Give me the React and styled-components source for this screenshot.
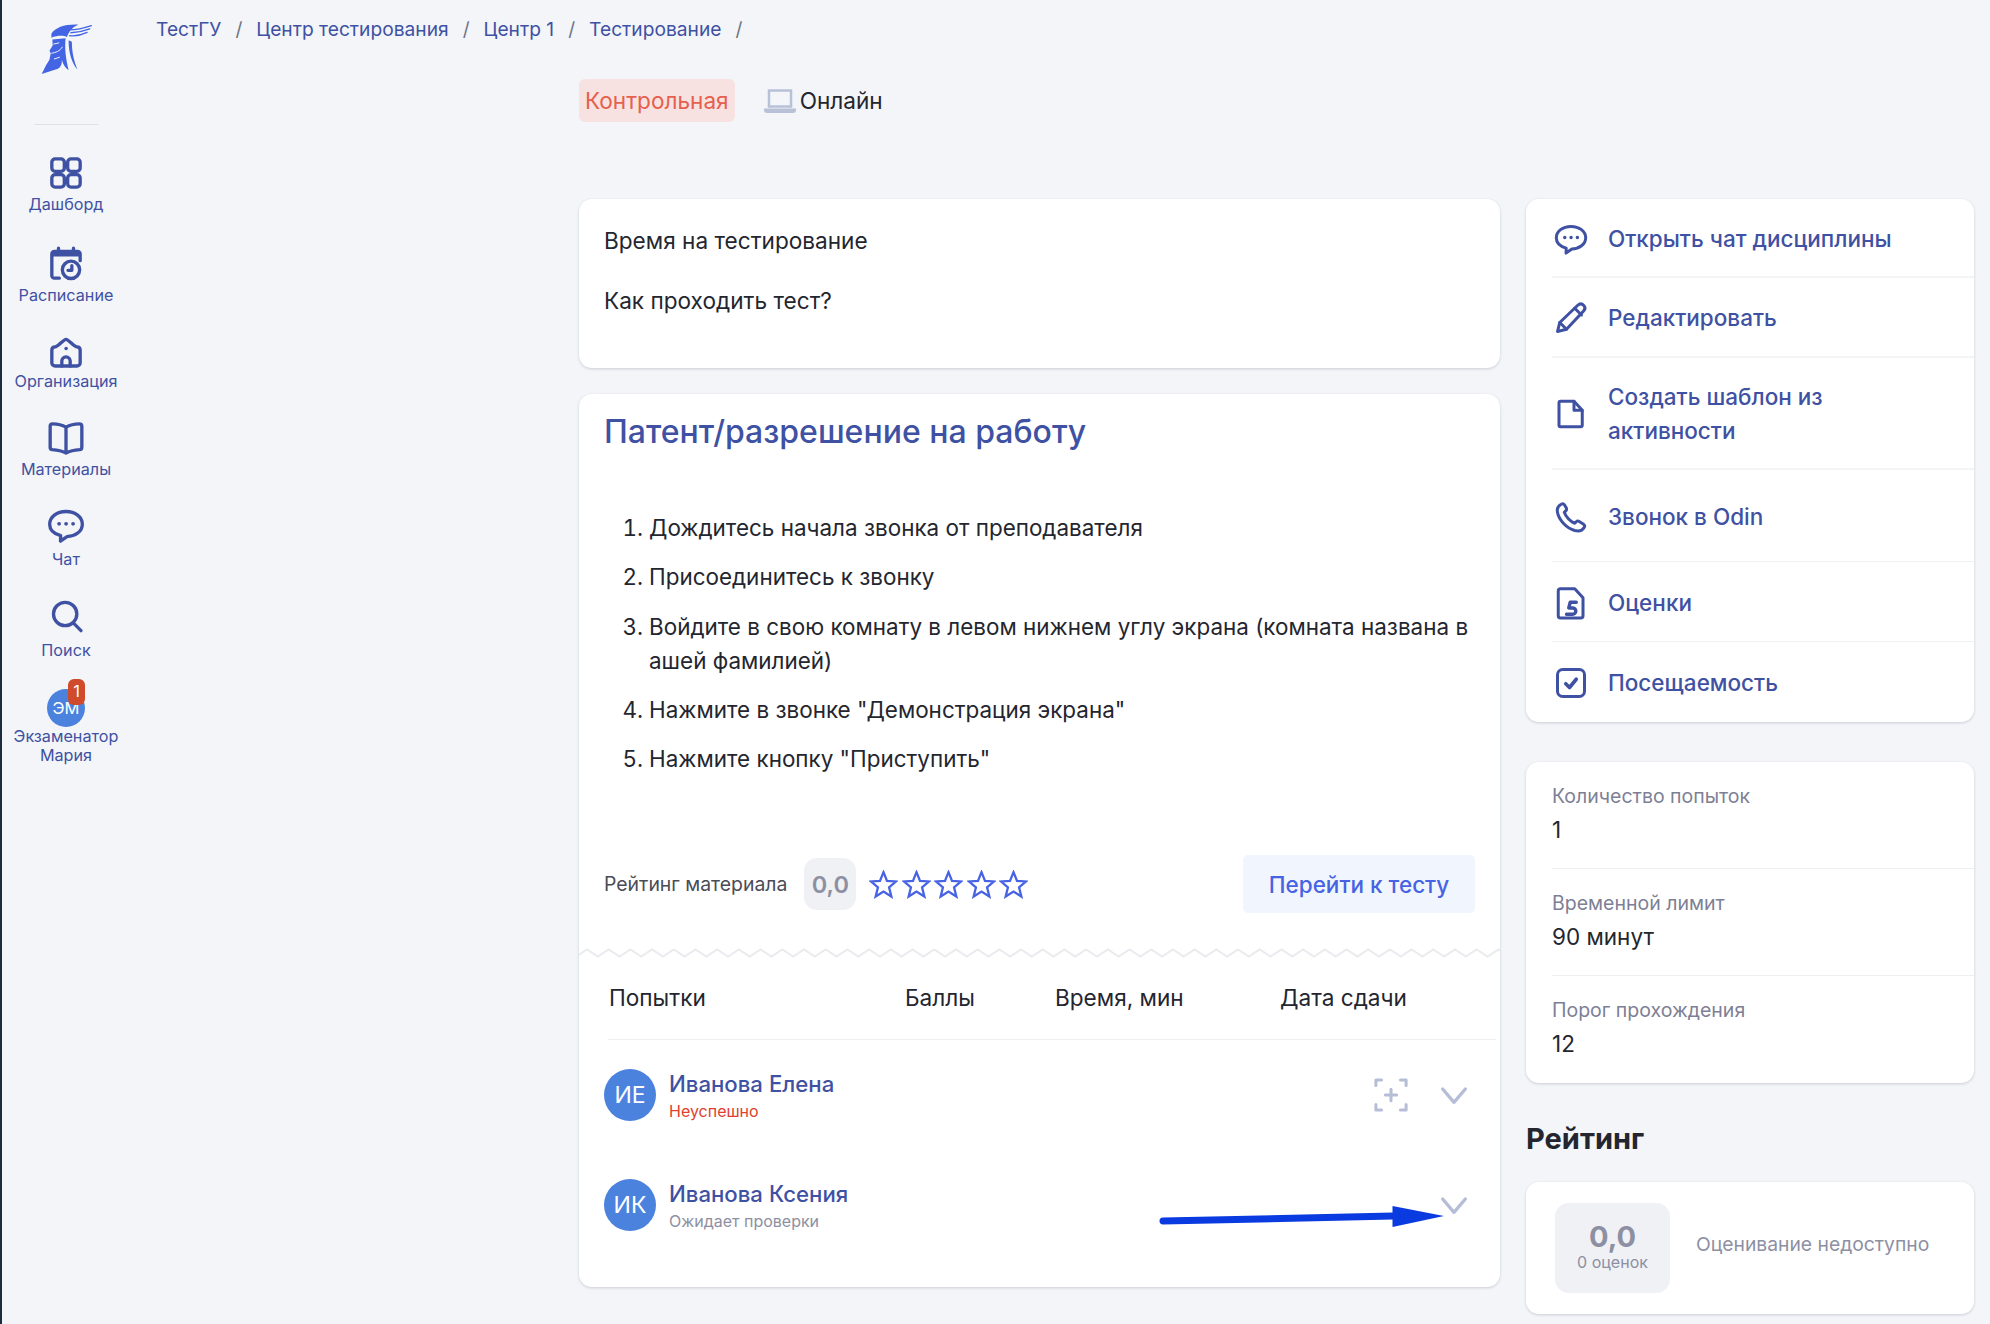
import React from "react";
import styled, { createGlobalStyle } from "styled-components";

const Global = createGlobalStyle`
  html, body { margin: 0; padding: 0; background: #f3f5f8; }
  body { font-family: Inter, "Noto Sans", sans-serif; color: #24262f; width: 1990px; height: 1324px; overflow: hidden; }
  * { box-sizing: border-box; }
  ol, ul, p, h1, h2 { margin: 0; padding: 0; }
`;
const C = { blue: "#3f51a3", star: "#4763e4" };

const Page = styled.div`
  display: flex;
  width: 1990px;
  height: 1324px;
  border-left: 2px solid #1d2b3f;
  overflow: hidden;
`;
const Sidebar = styled.nav`
  width: 128px;
  flex: none;
  display: flex;
  flex-direction: column;
  align-items: center;
  padding-top: 24px;
`;
const Logo = styled.svg`
  width: 51px;
  height: 51px;
`;
const Divider = styled.div`
  width: 64px;
  height: 1px;
  background: #dfe1e6;
  margin: 49px 0 28px;
`;
const NavItem = styled.a`
  display: flex;
  flex-direction: column;
  align-items: center;
  height: ${p => p.$h}px;
  color: ${C.blue};
  font-size: 16.2px;
  line-height: 19px;
  text-align: center;
  svg { width: 40px; height: 40px; margin-bottom: 2px; }
`;
const AvatarWrap = styled.div`
  position: relative;
`;
const NavBadge = styled.span`
  position: absolute;
  right: 0;
  top: -10px;
  width: 17px;
  height: 26px;
  border-radius: 6px;
  background: #cf4b2b;
  color: #fff;
  font-size: 16.5px;
  line-height: 25px;
  text-align: center;
`;
const Avatar = styled.div`
  width: ${p => p.$s}px;
  height: ${p => p.$s}px;
  border-radius: 50%;
  background: #4a82de;
  color: #fff;
  font-size: ${p => p.$f}px;
  display: flex;
  align-items: center;
  justify-content: center;
  flex: none;
`;
const Main = styled.div`
  flex: 1;
  display: flex;
  flex-direction: column;
  min-width: 0;
`;
const Crumbs = styled.div`
  display: flex;
  gap: 14px;
  padding: 18px 0 0 26px;
  font-size: 19.2px;
  line-height: 22px;
  height: 79px;
  color: ${C.blue};
  span { color: #6f7486; }
`;
const Content = styled.div`
  display: flex;
  gap: 26px;
  padding-left: 449px;
`;
const Left = styled.div`
  width: 921px;
  flex: none;
  display: flex;
  flex-direction: column;
`;
const Tags = styled.div`
  display: flex;
  align-items: center;
  height: 43px;
  margin-bottom: 77px;
  font-size: 22.6px;
`;
const Tag = styled.div`
  height: 43px;
  padding: 0 6px;
  border-radius: 6px;
  background: #f8e2e1;
  color: #e5604e;
  display: flex;
  align-items: center;
  margin-right: 29px;
`;
const Online = styled.div`
  display: flex;
  align-items: center;
  gap: 4px;
  svg { width: 32px; height: 26px; }
`;
const Card = styled.section`
  background: #fff;
  border-radius: 13px;
  box-shadow: 0 1px 3px rgba(40, 50, 80, 0.2);
`;
const InfoCard = styled(Card)`
  height: 169px;
  padding: 28px 25px 0;
  margin-bottom: 26px;
  font-size: 22.6px;
  line-height: 28px;
  display: flex;
  flex-direction: column;
  gap: 32px;
`;
const TestCard = styled(Card)`
  height: 893px;
  display: flex;
  flex-direction: column;
`;
const Title = styled.h1`
  font-size: 32px;
  font-weight: 500;
  line-height: 42px;
  color: ${C.blue};
  padding: 17px 25px 0;
`;
const Steps = styled.ol`
  margin: 58px 0 0;
  padding: 0 25px 0 70px;
  font-size: 22.45px;
  line-height: 34px;
  height: 344px;
  li { margin-bottom: 15.3px; }
`;
const RateRow = styled.div`
  display: flex;
  align-items: center;
  padding: 0 25px;
  height: 58px;
`;
const RateLabel = styled.span`
  font-size: 19.4px;
  color: #4a4c56;
  margin-right: 17px;
`;
const RateValue = styled.span`
  width: 52px;
  height: 52px;
  border-radius: 13px;
  background: #f0f1f4;
  color: #8d8fa3;
  font-size: 23.5px;
  font-weight: 600;
  display: flex;
  align-items: center;
  justify-content: center;
  margin-right: 13px;
`;
const Stars = styled.div`
  display: flex;
  gap: 3.4px;
  flex: 1;
  svg { width: 29px; height: 29px; }
`;
const GoButton = styled.button`
  width: 232px;
  height: 58px;
  border: 0;
  border-radius: 5px;
  background: #f1f6fe;
  color: #4763e4;
  font: 500 22.5px Inter, sans-serif;
`;
const Wave = styled.svg`
  display: block;
  width: 100%;
  height: 10px;
  margin-top: 35px;
`;
const Head = styled.div`
  display: grid;
  grid-template-columns: 296px 150px 225px 1fr;
  margin: 0 4px 0 29px;
  height: 82px;
  padding: 17px 0 0 1px;
  font-size: 22.6px;
  line-height: 46px;
  border-bottom: 1px solid #eef0f3;
`;
const Attempt = styled.div`
  display: flex;
  align-items: center;
  height: 110px;
  padding: 0 30px 0 25px;
  gap: 13px;
  svg.chev { width: 32px; height: 32px; margin-left: 17px; }
  svg.scan { width: 34px; height: 34px; }
`;
const Who = styled.div`
  flex: 1;
  display: flex;
  flex-direction: column;
  gap: 1px;
  padding-top: 1px;
`;
const Name = styled.div`
  font-size: 22.2px;
  font-weight: 500;
  line-height: 30px;
  color: ${C.blue};
`;
const Status = styled.div`
  font-size: 16px;
  line-height: 22px;
  color: ${p => p.$c};
`;
const ArrowMark = styled.svg`
  position: absolute;
  left: 1157px;
  top: 1195px;
  width: 290px;
  height: 36px;
`;
const Right = styled.aside`
  width: 448px;
  flex: none;
  margin-top: 120px;
  display: flex;
  flex-direction: column;
`;
const Menu = styled(Card)`
  padding-left: 26px;
  margin-bottom: 40px;
  height: 523px;
`;
const MenuItem = styled.a`
  display: flex;
  align-items: center;
  height: ${p => p.$h}px;
  gap: 19px;
  padding: 2px 0 0 1px;
  font-size: 22.5px;
  line-height: 34px;
  color: ${C.blue};
  font-weight: 500;
  border-bottom: ${p => (p.$last ? "0" : p.$thin ? "1px solid #eef0f3" : "2px solid #f3f4f6")};
  svg { width: 36px; height: 36px; flex: none; }
  span { width: 320px; }
`;
const Stats = styled(Card)`
  height: 321px;
  padding-left: 26px;
  margin-bottom: 40px;
`;
const Stat = styled.div`
  height: 107px;
  padding-top: 19px;
  border-bottom: ${p => (p.$last ? "0" : "1px solid #eceef1")};
`;
const StatLabel = styled.div`
  font-size: 19.5px;
  line-height: 30px;
  color: #7d8095;
`;
const StatValue = styled.div`
  font-size: 22.5px;
  line-height: 37px;
`;
const H2 = styled.h2`
  font-size: 29px;
  font-weight: 700;
  line-height: 36px;
  margin-top: -2px;
  margin-bottom: 25px;
`;
const RatingCard = styled(Card)`
  height: 132px;
  display: flex;
  align-items: center;
  padding: 0 29px;
  gap: 26px;
`;
const RatingBox = styled.div`
  width: 115px;
  height: 90px;
  border-radius: 14px;
  background: #f0f1f4;
  color: #8d8fa3;
  display: flex;
  flex-direction: column;
  align-items: center;
  justify-content: center;
  b { font-size: 29px; line-height: 29px; font-weight: 700; }
  small { font-size: 16px; line-height: 23px; }
`;
const RatingText = styled.div`
  font-size: 19.3px;
  color: #8d8fa3;
  margin-bottom: 8px;
`;

const Ico = ({ children, c = C.blue, w = 2 }) => (
  <svg viewBox="0 0 24 24" fill="none" stroke={c} strokeWidth={w} strokeLinecap="round" strokeLinejoin="round">{children}</svg>
);
const ChatShape = () => (
  <>
    <path d="M12 3.6c5.5 0 9.8 3.2 9.8 7.6 0 4.4-4.3 7.3-9.2 7.5l-3.900 2.700.1-3.300C4.900 17 2.200 14.500 2.200 11.200 2.200 6.800 6.500 3.600 12 3.600Z" />
    <path d="M7.800 11h.1M12 11h.1M16.200 11h.1" strokeWidth="2.200" />
  </>
);
const Chat = ({ dy = 0 }) => (
  <Ico><g transform={`translate(0 ${dy})`}><ChatShape /></g></Ico>
);
const Star = () => (
  <svg viewBox="0 0 24 24" fill="none" stroke={C.star} strokeWidth="1.900" strokeLinejoin="miter">
    <path d="M12 1.800l2.900 7.200 7.500.5-5.800 4.900 1.900 7.600L12 17.900l-6.500 4.100 1.900-7.600-5.800-4.900 7.500-.5z" />
  </svg>
);
const Chevron = () => (
  <svg className="chev" viewBox="0 0 24 24" fill="none" stroke="#b6bdd6" strokeWidth="2.500" strokeLinecap="round" strokeLinejoin="round"><path d="M3.500 7.500l8.500 10 8.500-10" /></svg>
);

const steps = [
  "Дождитесь начала звонка от преподавателя",
  "Присоединитесь к звонку",
  "Войдите в свою комнату в левом нижнем углу экрана (комната названа в ашей фамилией)",
  "Нажмите в звонке \"Демонстрация экрана\"",
  "Нажмите кнопку \"Приступить\"",
];

const wavePath = Array.from({ length: 88 }, (_, i) => `${i === 0 ? "M" : "L"}${-13.7 + i * 10.85} ${i % 2 === 0 ? 1.5 : 8.5}`).join(" ");

export default function App() {
  return (
    <Page>
      <Global />
      <Sidebar>
        <Logo viewBox="120 70 157 157">
          <path fill="#4364e3" d="M152 100C165 80 195 70 235 72C215 80 205 95 200 110C190 105 170 105 152 112Z" />
          <path fill="none" stroke="#4364e3" strokeWidth="4" strokeLinecap="round" d="M205 88C225 88 250 84 275 75M212 97C232 96 252 92 270 85M208 106C225 108 245 104 262 96" />
          <path fill="#4364e3" d="M155 118L196 114C192 140 196 175 205 212C195 205 188 195 184 180C186 195 178 205 172 208L122 224L136 196L146 180L150 160L146 152L156 136Z" />
          <path fill="#4364e3" d="M205 120C205 160 215 190 232 210C222 185 215 160 215 125Z" />
          <path fill="none" stroke="#f3f5f8" strokeWidth="3" d="M158 132L176 128M152 160C165 158 178 154 186 140M160 178L178 172" />
        </Logo>
        <Divider />
        <NavItem $h={91}>
          <Ico><rect x="3.500" y="3.500" width="7.500" height="7.500" rx="2" /><rect x="13" y="3.500" width="7.500" height="7.500" rx="2" /><rect x="3.500" y="13" width="7.500" height="7.500" rx="2" /><rect x="13" y="13" width="7.500" height="7.500" rx="2" /></Ico>
          Дашборд
        </NavItem>
        <NavItem $h={86}>
          <Ico><path d="M8 20.500H5a1.500 1.500 0 0 1-1.500-1.500V6A1.500 1.500 0 0 1 5 4.500h14A1.500 1.500 0 0 1 20.500 6v4M7.500 2.500v3.500M16.500 2.500v3.500M3.500 6.500h17" /><circle cx="15" cy="15.500" r="5.200" /><path d="M15.500 13v2.800h-2.300" /></Ico>
          Расписание
        </NavItem>
        <NavItem $h={88}>
          <Ico>
            <g transform="translate(0 2.600)">
              <path d="M3.500 9.500C3.500 8 4.500 7.500 5.500 7.500c1.800 0 5-4.500 6.500-4.500s4.700 4.500 6.500 4.500c1 0 2 .5 2 2V17a2 2 0 0 1-2 2h-13a2 2 0 0 1-2-2z" />
              <path d="M9.500 19v-3a2.500 2.500 0 0 1 5 0v3" />
              <path d="M12 8.500h.1" />
            </g>
          </Ico>
          Организация
        </NavItem>
        <NavItem $h={90}>
          <Ico><path d="M12 5.500C9.500 4 6.500 3.500 4 3.500c-.9 0-1.500.6-1.500 1.500v12.500c0 .8.500 1.400 1.300 1.500 3 .2 5.700.7 8.200 2 2.500-1.300 5.200-1.800 8.200-2 .8-.1 1.300-.7 1.300-1.500V5c0-.9-.6-1.500-1.500-1.500-2.500 0-5.500.5-8 2ZM12 5.500v15.500" /></Ico>
          Материалы
        </NavItem>
        <NavItem $h={91}><Chat dy={-1.500} />Чат</NavItem>
        <NavItem $h={90}>
          <Ico><g transform="translate(.5 -1.500)"><circle cx="11" cy="10.500" r="7" /><path d="M16 16l4.500 4.500" /></g></Ico>
          Поиск
        </NavItem>
        <NavItem>
          <AvatarWrap>
            <Avatar $s={38} $f={16.500}>ЭМ</Avatar>
            <NavBadge>1</NavBadge>
          </AvatarWrap>
          Экзаменатор<br />Мария
        </NavItem>
      </Sidebar>
      <Main>
        <Crumbs>
          ТестГУ <span>/</span> Центр тестирования <span>/</span> Центр 1 <span>/</span> Тестирование <span>/</span>
        </Crumbs>
        <Content>
          <Left>
            <Tags>
              <Tag>Контрольная</Tag>
              <Online>
                <svg viewBox="0 0 32 26"><path d="M5 2.500h22v16H5z" fill="none" stroke="#b9c1d9" strokeWidth="2.500" /><path d="M0 20.500h32v1.500a3 3 0 0 1-3 3H3a3 3 0 0 1-3-3z" fill="#b9c1d9" /></svg>
                Онлайн
              </Online>
            </Tags>
            <InfoCard>
              <div>Время на тестирование</div>
              <div>Как проходить тест?</div>
            </InfoCard>
            <TestCard>
              <Title>Патент/разрешение на работу</Title>
              <Steps>{steps.map(s => <li key={s}>{s}</li>)}</Steps>
              <RateRow>
                <RateLabel>Рейтинг материала</RateLabel>
                <RateValue>0,0</RateValue>
                <Stars><Star /><Star /><Star /><Star /><Star /></Stars>
                <GoButton>Перейти к тесту</GoButton>
              </RateRow>
              <Wave viewBox="0 0 921 10" preserveAspectRatio="none">
                <path fill="none" stroke="#e9ebef" strokeWidth="2" d={wavePath} />
              </Wave>
              <Head>
                <div>Попытки</div><div>Баллы</div><div>Время, мин</div><div>Дата сдачи</div>
              </Head>
              <Attempt>
                <Avatar $s={52} $f={23}>ИЕ</Avatar>
                <Who><Name>Иванова Елена</Name><Status $c="#e0402f">Неуспешно</Status></Who>
                <svg className="scan" viewBox="0 0 36 36" fill="none" stroke="#b6bdd6" strokeWidth="3.200" strokeLinecap="round" strokeLinejoin="round"><path d="M2 8V2h6M28 2h6v6M34 28v6h-6M8 34H2v-6" /><path d="M18 12v12M12 18h12" /></svg>
                <Chevron />
              </Attempt>
              <Attempt>
                <Avatar $s={52} $f={23}>ИК</Avatar>
                <Who><Name>Иванова Ксения</Name><Status $c="#8d8fa3">Ожидает проверки</Status></Who>
                <Chevron />
              </Attempt>
            </TestCard>
          </Left>
          <Right>
            <Menu>
              <MenuItem $h={79}><Chat /><span>Открыть чат дисциплины</span></MenuItem>
              <MenuItem $h={80}>
                <Ico><path d="M3 21l1.500-6L16.500 3.500c1.200-1.100 2.800-1.100 3.900 0s1.100 2.700 0 3.900L9 19.500z" /><path d="M14.500 5.500l4.500 4.500M4.500 15l4.500 4.500" /></Ico>
                <span>Редактировать</span>
              </MenuItem>
              <MenuItem $h={112}>
                <Ico><path d="M5 3.500h9l5.500 6V19.500a1 1 0 0 1-1 1H5a1 1 0 0 1-1-1v-15a1 1 0 0 1 1-1z" /><path d="M14 3.500v6h5.500" /></Ico>
                <span>Создать шаблон из активности</span>
              </MenuItem>
              <MenuItem $h={92} $thin>
                <Ico><path d="M5.500 3.500c-2 1-3 3-2.500 5.500 1 5 6 10.500 11.500 12 2.500.6 5 .2 6.300-2 .5-.8.3-1.600-.4-2.100l-2.900-1.900c-.7-.4-1.400-.4-2 .2l-1 1c-3-1-6-4.500-7-7.300l1-1c.6-.6.700-1.300.3-2L7.700 4c-.5-.800-1.400-1-2.200-.500z" /></Ico>
                <span>Звонок в Odin</span>
              </MenuItem>
              <MenuItem $h={80} $thin>
                <Ico><path d="M5 2.500h9.500l5.500 6v12a1.500 1.500 0 0 1-1.500 1.500H5a1.500 1.500 0 0 1-1.500-1.500V4A1.500 1.500 0 0 1 5 2.500z" /><path d="M15.500 11.500h-4l-1 3.800h2.800a2 2 0 0 1-.4 4.200H9" strokeWidth="2.300" /></Ico>
                <span>Оценки</span>
              </MenuItem>
              <MenuItem $h={80} $last>
                <Ico><rect x="3" y="3" width="18" height="18" rx="3.500" /><path d="M8.500 12.500l2.500 2.500 4.500-5.500" strokeWidth="2.400" /></Ico>
                <span>Посещаемость</span>
              </MenuItem>
            </Menu>
            <Stats>
              <Stat><StatLabel>Количество попыток</StatLabel><StatValue>1</StatValue></Stat>
              <Stat><StatLabel>Временной лимит</StatLabel><StatValue>90 минут</StatValue></Stat>
              <Stat $last><StatLabel>Порог прохождения</StatLabel><StatValue>12</StatValue></Stat>
            </Stats>
            <H2>Рейтинг</H2>
            <RatingCard>
              <RatingBox><b>0,0</b><small>0 оценок</small></RatingBox>
              <RatingText>Оценивание недоступно</RatingText>
            </RatingCard>
          </Right>
        </Content>
      </Main>
      <ArrowMark viewBox="0 0 290 36">
        <path d="M6 26L236 21" stroke="#0a3be0" strokeWidth="7" strokeLinecap="round" />
        <path d="M235.500 11L287 21L235.500 32z" fill="#0a3be0" />
      </ArrowMark>
    </Page>
  );
}
